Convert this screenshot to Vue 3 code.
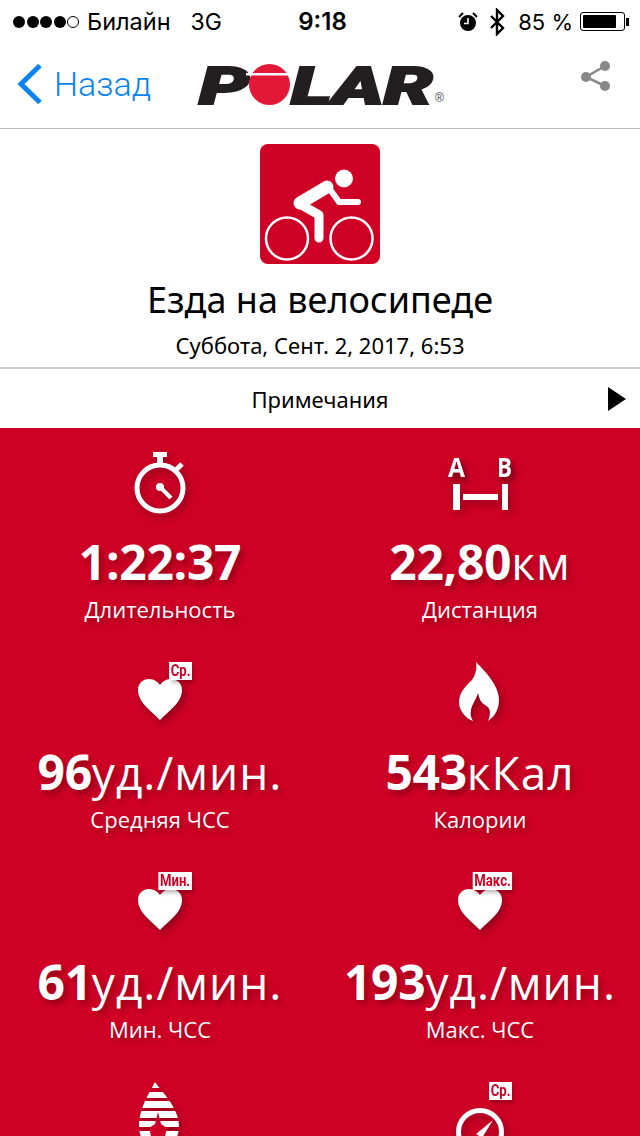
<template>
  <div class="screen">
    <div class="status-bar">
      <div class="status-left">
        <div class="signal">
          <span v-for="n in 5" :key="n" class="dot" :class="{ empty: n === 5 }"></span>
        </div>
        <span class="carrier">Билайн</span>
        <span class="network">3G</span>
      </div>
      <span class="time">9:18</span>
      <div class="status-right">
        <svg class="alarm" width="20" height="20" viewBox="0 0 20 20">
          <circle cx="10" cy="11" r="8" fill="#000" />
          <path d="M10 6v5.5H6" fill="none" stroke="#fff" stroke-width="1.6" />
          <path d="M1 5l4-4M19 5l-4-4" stroke="#000" stroke-width="2" />
        </svg>
        <svg class="bluetooth" width="16" height="28" viewBox="0 0 16 28">
          <path d="M2 8l12 12-6 6V2l6 6L2 20" fill="none" stroke="#000" stroke-width="2.4" />
        </svg>
        <span class="battery-text">85 %</span>
        <div class="battery"><div class="battery-fill"></div></div>
        <div class="battery-nub"></div>
      </div>
    </div>

    <div class="nav-bar">
      <div class="back">
        <svg width="26" height="42" viewBox="0 0 26 42">
          <path d="M23 2.500L4 21l19 18.500" fill="none" stroke="#0a84f5" stroke-width="5" />
        </svg>
        <span class="back-text">Назад</span>
      </div>
      <svg class="logo" width="252" height="44" viewBox="0 0 252 44">
        <text x="3" y="41" class="logo-text" textLength="50" lengthAdjust="spacingAndGlyphs">P</text>
        <circle cx="73.500" cy="21.500" r="20.500" fill="#e31837" />
        <rect x="50" y="10" width="48" height="2.500" fill="#fff" />
        <text x="95" y="41" class="logo-text" textLength="142" lengthAdjust="spacingAndGlyphs">LAR</text>
        <text x="239" y="39" class="logo-reg">®</text>
      </svg>
      <svg class="share" width="32" height="32" viewBox="0 0 32 32">
        <path d="M25 6L6 17l19 9" fill="none" stroke="#888" stroke-width="2.500" />
        <circle cx="25" cy="6" r="5" fill="#888" />
        <circle cx="6" cy="17" r="5" fill="#888" />
        <circle cx="25" cy="26" r="5" fill="#888" />
      </svg>
    </div>

    <div class="summary">
      <div class="sport-icon">
        <svg width="120" height="120" viewBox="0 0 120 120">
          <circle cx="84" cy="34.500" r="9" fill="#fff" />
          <circle cx="27" cy="94.500" r="21" fill="none" stroke="#fff" stroke-width="2.500" />
          <circle cx="91.500" cy="94.500" r="21" fill="none" stroke="#fff" stroke-width="2.500" />
          <path d="M40 59L67 43" fill="none" stroke="#fff" stroke-width="13" stroke-linecap="round" />
          <path d="M69 44l10 14h19" fill="none" stroke="#fff" stroke-width="6" stroke-linecap="round" stroke-linejoin="round" />
          <path d="M40 60l19 11v23" fill="none" stroke="#fff" stroke-width="9" stroke-linecap="round" stroke-linejoin="round" />
        </svg>
      </div>
      <h1 class="title">Езда на велосипеде</h1>
      <p class="date">Суббота, Сент. 2, 2017, 6:53</p>
    </div>

    <div class="notes">
      <span>Примечания</span>
      <svg class="notes-arrow" width="18" height="24" viewBox="0 0 18 24">
        <path d="M0 0l18 12L0 24z" fill="#000" />
      </svg>
    </div>

    <div class="metrics">
      <div v-for="item in metrics" :key="item.id" class="metric">
        <div class="metric-icon">
          <svg class="icon" width="120" height="72" viewBox="0 0 120 72">
            <g v-if="item.icon === 'timer'" fill="none" stroke="#fff">
              <circle cx="60" cy="40" r="23" stroke-width="5" />
              <path d="M60 9v8" stroke-width="6" />
              <path d="M53 6.500h14" stroke-width="5" />
              <path d="M76 22l6-6" stroke-width="5" />
              <path d="M60 39l11 11" stroke-width="4" />
              <circle cx="60" cy="39" r="4" fill="#fff" stroke="none" />
            </g>
            <g v-else-if="item.icon === 'distance'" fill="#fff">
              <text x="28" y="29" class="ab-text" textLength="17" lengthAdjust="spacingAndGlyphs">A</text>
              <text x="77" y="29" class="ab-text" textLength="15" lengthAdjust="spacingAndGlyphs">B</text>
              <rect x="33" y="36" width="7" height="26" />
              <rect x="82" y="36" width="6" height="26" />
              <rect x="43" y="46" width="35" height="6" />
            </g>
            <path
              v-else-if="item.icon === 'heart'"
              d="M60 62C50 52 38 44 38 32 38 25 43 21 49 21 54 21 58 24 60 27 62 24 66 21 71 21 77 21 82 25 82 32 82 44 70 52 60 62Z"
              fill="#fff"
            />
            <path
              v-else-if="item.icon === 'flame'"
              d="M56 4C66 14 79 28 79 42 79 52 74 59 68 63 71 56 71 50 65 47 61 45 59 40 58 35 56 42 52 46 51 52 50 56 51 60 53 63 45 60 39 52 39 44 39 34 46 28 52 22 56 16 57 10 56 4Z"
              fill="#fff"
            />
            <g v-else-if="item.icon === 'drop'">
              <clipPath id="drop-clip">
                <path d="M55 4C62 14 79 30 79 48 79 62 70 72 59 72 48 72 39 62 39 48 39 30 50 14 55 4Z" />
              </clipPath>
              <g clip-path="url(#drop-clip)" fill="#fff">
                <rect x="30" y="4" width="60" height="6" />
                <rect x="30" y="14" width="60" height="6" />
                <rect x="30" y="23" width="60" height="7" />
                <rect x="30" y="33" width="60" height="7" />
                <rect x="30" y="43" width="60" height="6" />
                <rect x="30" y="53" width="60" height="19" />
              </g>
              <path d="M58 34l3 12 6 4-3 12H52l-3-12 6-4z" fill="#cf0025" />
            </g>
            <g v-else-if="item.icon === 'gauge'">
              <circle cx="60" cy="54" r="21.500" fill="none" stroke="#fff" stroke-width="5" />
              <path d="M56 56l17-14-11 18z" fill="#fff" />
            </g>
          </svg>
          <span v-if="item.badge" class="badge">{{ item.badge }}</span>
        </div>
        <div v-if="item.value" class="value">
          <span class="value-num">{{ item.value }}</span><span class="value-unit">{{ item.unit }}</span>
        </div>
        <div v-if="item.label" class="label">{{ item.label }}</div>
      </div>
    </div>
  </div>
</template>

<script setup>
// последний ряд в кадр попадает только иконками
const metrics = [
  { id: 1, icon: 'timer', value: '1:22:37', unit: '', label: 'Длительность' },
  { id: 2, icon: 'distance', value: '22,80', unit: 'км', label: 'Дистанция' },
  { id: 3, icon: 'heart', badge: 'Ср.', value: '96', unit: 'уд./мин.', label: 'Средняя ЧСС' },
  { id: 4, icon: 'flame', value: '543', unit: 'кКал', label: 'Калории' },
  { id: 5, icon: 'heart', badge: 'Мин.', value: '61', unit: 'уд./мин.', label: 'Мин. ЧСС' },
  { id: 6, icon: 'heart', badge: 'Макс.', value: '193', unit: 'уд./мин.', label: 'Макс. ЧСС' },
  { id: 7, icon: 'drop' },
  { id: 8, icon: 'gauge', badge: 'Ср.' }
]
</script>

<style scoped>
.screen {
  width: 640px;
  height: 1136px;
  overflow: hidden;
  background: #fff;
  font-family: "Open Sans", sans-serif;
  color: #000;
}

.status-bar {
  height: 40px;
  padding: 3px 11px 0 13px;
  box-sizing: border-box;
  display: grid;
  grid-template-columns: 1fr auto 1fr;
  align-items: center;
  font-family: Inter, sans-serif;
  font-size: 22px;
}

.status-left,
.status-right {
  display: flex;
  align-items: center;
}

.status-right {
  justify-content: flex-end;
}

.signal {
  display: flex;
  gap: 1.500px;
  margin-right: 8px;
}

.dot {
  width: 12px;
  height: 12px;
  border-radius: 50%;
  background: #000;
  box-sizing: border-box;
}

.dot.empty {
  background: #fff;
  border: 1px solid #000;
}

.carrier {
  font-size: 23.500px;
}

.network {
  margin-left: 20px;
  font-size: 23px;
}

.time {
  font-size: 24px;
  font-weight: 600;
  margin-left: 3px;
}

.bluetooth {
  margin-left: 11px;
}

.battery-text {
  margin-left: 13px;
}

.battery {
  width: 45px;
  height: 19px;
  margin-left: 7px;
  padding: 2px;
  box-sizing: border-box;
  border: 1px solid #000;
  border-radius: 3px;
}

.battery-fill {
  width: 85%;
  height: 100%;
  background: #000;
  border-radius: 1px;
}

.battery-nub {
  width: 3px;
  height: 8px;
  margin-left: 1px;
  background: #000;
}

.nav-bar {
  height: 89px;
  box-sizing: border-box;
  border-bottom: 1px solid #bbb;
  padding: 0 28px 0 17px;
  display: flex;
  align-items: center;
}

.back {
  display: flex;
  align-items: center;
  color: #0a84f5;
}

.back-text {
  margin-left: 11px;
  font-family: Roboto, sans-serif;
  font-size: 34px;
  font-weight: 300;
}

.logo {
  margin-left: 45px;
  margin-top: 2px;
  overflow: visible;
}

.logo-text {
  font-family: Roboto, sans-serif;
  font-size: 52px;
  font-weight: 900;
  font-style: italic;
  fill: #231f20;
  stroke: #231f20;
  stroke-width: 2px;
}

.logo-reg {
  font-family: "Liberation Sans", sans-serif;
  font-size: 12px;
  fill: #444;
}

.share {
  margin-left: auto;
  margin-top: -16px;
}

.summary {
  height: 240px;
  box-sizing: border-box;
  padding-top: 15px;
  border-bottom: 2px solid #ccc;
  display: flex;
  flex-direction: column;
  align-items: center;
}

.sport-icon {
  width: 120px;
  height: 120px;
  background: #cf0025;
  border-radius: 8px;
}

.sport-icon svg {
  display: block;
}

.title {
  margin: 13px 0 0;
  font-family: "Noto Sans", sans-serif;
  font-size: 36px;
  font-weight: 400;
  line-height: 46px;
}

.date {
  margin: 8px 0 0;
  font-family: "Noto Sans", sans-serif;
  font-size: 22px;
  line-height: 28px;
}

.notes {
  height: 59px;
  box-sizing: border-box;
  position: relative;
  display: flex;
  align-items: center;
  justify-content: center;
  font-family: "Noto Sans", sans-serif;
  font-size: 22px;
}

.notes-arrow {
  position: absolute;
  right: 14px;
  top: 18px;
}

.metrics {
  background: #cf0025;
  padding-top: 20px;
  display: grid;
  grid-template-columns: 320px 320px;
  color: #fff;
  text-shadow: 3px 4px 6px rgba(0, 0, 0, 0.3);
}

.metric {
  height: 210px;
  display: flex;
  flex-direction: column;
  align-items: center;
}

.metric-icon {
  position: relative;
  width: 120px;
  height: 72px;
}

.icon {
  display: block;
  filter: drop-shadow(3px 4px 4px rgba(0, 0, 0, 0.3));
}

.ab-text {
  font-family: "Open Sans", sans-serif;
  font-size: 27px;
  font-weight: 700;
  fill: #fff;
}

.badge {
  position: absolute;
  top: 4px;
  right: 28px;
  height: 18px;
  padding: 0 2px;
  background: #fff;
  color: #cf0025;
  font-family: Roboto, sans-serif;
  font-size: 16px;
  font-weight: 700;
  line-height: 18px;
  text-shadow: none;
  box-shadow: 2px 3px 4px rgba(0, 0, 0, 0.25);
  transform: scaleX(0.82);
  transform-origin: right center;
}

.value {
  margin-top: 16px;
  height: 52px;
  line-height: 52px;
  white-space: nowrap;
}

.value-num {
  font-size: 48px;
  font-weight: 700;
  letter-spacing: -0.3px;
}

.value-unit {
  font-size: 46px;
  letter-spacing: 1px;
}

.label {
  margin-top: 7px;
  font-size: 22px;
  line-height: 28px;
}
</style>

<style>
body {
  background: #fff;
  overflow: hidden;
}
</style>
